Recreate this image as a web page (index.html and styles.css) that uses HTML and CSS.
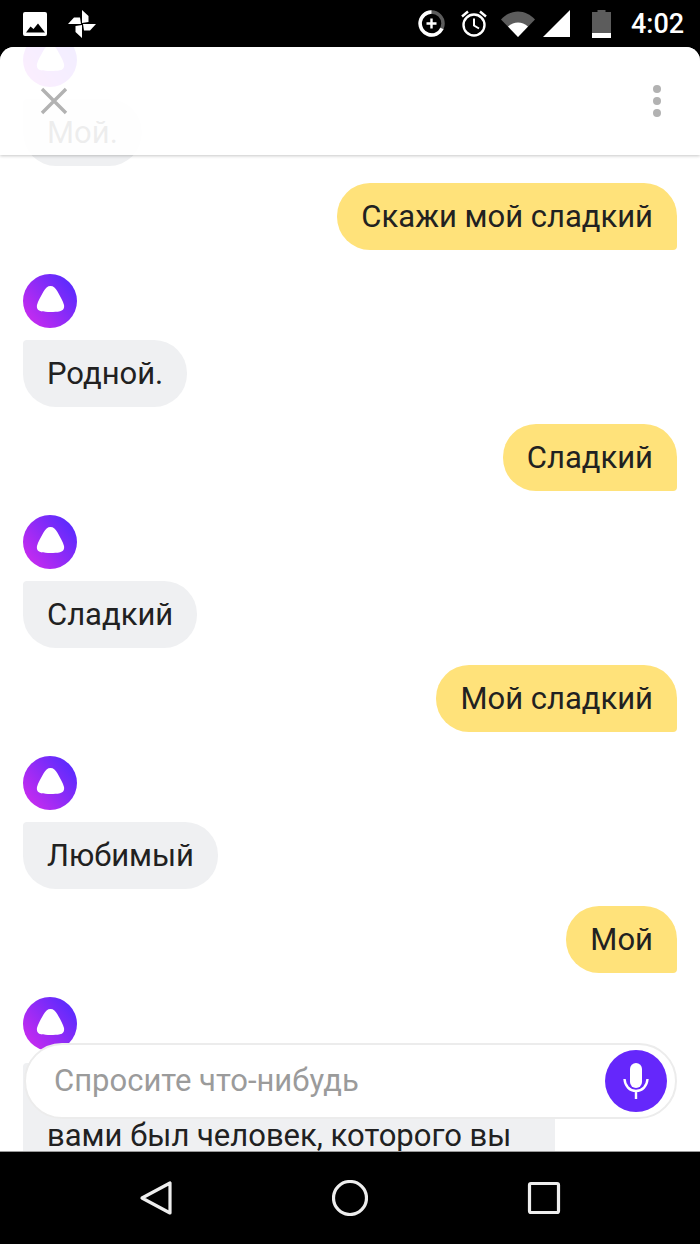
FILE: index.html
```html
<!DOCTYPE html>
<html lang="ru">
<head>
    <meta charset="UTF-8">
    <title>Алиса</title>
    <link rel="stylesheet" href="styles.css">
</head>
<body>
    <svg class="sprite" width="0" height="0">
        <defs>
            <linearGradient id="aliceGrad" x1="1" y1="0.1" x2="0" y2="0.9">
                <stop offset="0" stop-color="#4f2bff"/>
                <stop offset="1" stop-color="#d02bee"/>
            </linearGradient>
            <symbol id="alice" viewBox="0 0 54 54">
                <circle cx="27" cy="27" r="27" fill="url(#aliceGrad)"/>
                <path d="M27.500 12C24.500 12 22.500 14 20.500 17.500C18 22 15 27 14 31C13.500 34 14.500 36.500 18 37.200C21 37.800 24 38 27.500 38C31 38 34 37.800 37 37.200C40.500 36.500 41.500 34 41 31C40 27 37 22 34.500 17.500C32.500 14 30.500 12 27.500 12Z" fill="#fff"/>
            </symbol>
        </defs>
    </svg>

    <div class="phone">
        <!-- Status bar -->
        <div class="status-bar">
            <svg class="ic-image" width="24" height="24" viewBox="0 0 24 24">
                <rect width="24" height="24" rx="2" fill="#fff"/>
                <path d="M3 20.500L7.500 14.500L10.500 17L15 11.500L22 20.500Z" fill="#000"/>
            </svg>
            <svg class="ic-pinwheel" width="28" height="28" viewBox="0 0 28 28">
                <path d="M14 0L20.500 6V12L14 13ZM28 14L22 20.500H16L15 14ZM14 28L7.500 22V16L14 15ZM0 14L6 7.500H12L13 14Z" fill="#fff"/>
            </svg>
            <div class="status-space"></div>
            <svg width="27" height="27" viewBox="0 0 27 27">
                <circle cx="13.500" cy="13.500" r="11.500" fill="none" stroke="#5c5c5c" stroke-width="3.500"/>
                <path d="M13.500 2A11.500 11.500 0 1 0 24 18.500" fill="none" stroke="#fff" stroke-width="3.500"/>
                <path d="M13.500 8.500V18.500M8.500 13.500H18.500" stroke="#fff" stroke-width="2.400"/>
            </svg>
            <svg class="ic-alarm" width="28" height="27" viewBox="0 0 28 27">
                <circle cx="14" cy="15" r="10.500" fill="none" stroke="#fff" stroke-width="2.400"/>
                <path d="M14 8.500V15.500L19 18.500" fill="none" stroke="#fff" stroke-width="2"/>
                <path d="M2 6.500L8 1.500M26 6.500L20 1.500" stroke="#fff" stroke-width="2.400"/>
            </svg>
            <svg class="ic-wifi" width="34" height="26" viewBox="0 0 34 26">
                <path d="M0 8.500C4.500 3.500 10.500 0.500 17 0.500C23.500 0.500 29.500 3.500 34 8.500L17 26Z" fill="#5c5c5c"/>
                <path d="M7 15.500C10 13 13.500 11.500 17 11.500C20.500 11.500 24 13 27 15.500L17 26Z" fill="#fff"/>
            </svg>
            <svg class="ic-signal" width="27" height="27" viewBox="0 0 27 27">
                <path d="M27 0V27H0Z" fill="#fff"/>
            </svg>
            <svg class="ic-battery" width="19" height="28" viewBox="0 0 19 28">
                <path d="M5.500 0H13.500V2H19V28H0V2H5.500Z" fill="#5c5c5c"/>
                <rect y="23" width="19" height="5" fill="#fff"/>
            </svg>
            <span class="clock">4:02</span>
        </div>

        <!-- Chat sheet -->
        <div class="sheet">
            <div class="chat">
                <svg class="avatar"><use href="#alice"/></svg>
                <div class="bubble bot">Мой.</div>
                <div class="bubble user">Скажи мой сладкий</div>
                <svg class="avatar"><use href="#alice"/></svg>
                <div class="bubble bot">Родной.</div>
                <div class="bubble user">Сладкий</div>
                <svg class="avatar"><use href="#alice"/></svg>
                <div class="bubble bot">Сладкий</div>
                <div class="bubble user">Мой сладкий</div>
                <svg class="avatar"><use href="#alice"/></svg>
                <div class="bubble bot">Любимый</div>
                <div class="bubble user">Мой</div>
                <svg class="avatar"><use href="#alice"/></svg>
                <div class="bubble bot long">вами был человек, которого вы</div>
            </div>

            <div class="sheet-header">
                <svg width="28" height="28" viewBox="0 0 28 28">
                    <path d="M2 2L26 26M26 2L2 26" stroke="#b2b2b2" stroke-width="3.400"/>
                </svg>
                <div class="dots"><i></i><i></i><i></i></div>
            </div>

            <div class="composer">
                <span class="placeholder">Спросите что-нибудь</span>
                <div class="mic">
                    <svg width="26" height="37" viewBox="0 0 26 37">
                        <rect x="7" y="0" width="12" height="25" rx="6" fill="#fff"/>
                        <path d="M1.500 16C2 23 6.500 28 13 28C19.500 28 24 23 24.500 16M13 28V36" fill="none" stroke="#fff" stroke-width="2.400"/>
                    </svg>
                </div>
            </div>
        </div>

        <!-- Nav bar -->
        <div class="nav-bar">
            <svg width="36" height="36" viewBox="0 0 36 36">
                <path d="M32 3V33L4 18Z" fill="none" stroke="#eee" stroke-width="3.200" stroke-linejoin="round"/>
            </svg>
            <svg width="36" height="36" viewBox="0 0 36 36">
                <circle cx="18" cy="18" r="16.500" fill="none" stroke="#eee" stroke-width="3.200"/>
            </svg>
            <svg width="36" height="36" viewBox="0 0 36 36">
                <rect x="3.500" y="3.500" width="29" height="29" rx="1.500" fill="none" stroke="#eee" stroke-width="3.200"/>
            </svg>
        </div>
    </div>
</body>
</html>
```
FILE: styles.css
```css
* {
    padding: 0px;
    margin: 0px;
    box-sizing: border-box;
}
body {
    background-color: #000;
    font-family: Roboto, "Noto Sans", sans-serif;
    overflow: hidden;
}
.sprite {
    position: absolute;
}
.phone {
    width: 700px;
    height: 1244px;
    display: flex;
    flex-direction: column;
}

/* STATUS BAR */
.status-bar {
    height: 47px;
    flex-shrink: 0;
    display: flex;
    align-items: center;
    padding-left: 23px;
    color: #fff;
}
.ic-pinwheel {
    margin-left: 21px;
}
.status-space {
    flex: 1;
}
.ic-alarm {
    margin-left: 15px;
}
.ic-wifi {
    margin-left: 13px;
}
.ic-signal {
    margin-left: 8px;
}
.ic-battery {
    margin-left: 22px;
}
.clock {
    margin-left: 20px;
    width: 69px;
    font-size: 27px;
    font-weight: 500;
}

/* SHEET */
.sheet {
    flex: 1;
    min-height: 0;
    position: relative;
    overflow: hidden;
    background-color: #fff;
    border-radius: 14px 14px 0 0;
}
.chat {
    margin-top: -14px;
    padding: 0 23px;
    display: flex;
    flex-direction: column;
    align-items: flex-start;
}
.avatar {
    width: 54px;
    height: 54px;
    margin-top: 24px;
    flex-shrink: 0;
}
.avatar:first-child {
    margin-top: 0;
}
.bubble {
    font-size: 31px;
    line-height: 36px;
    padding: 16px 24px 15px;
    color: #212121;
    white-space: nowrap;
}
.bubble.bot {
    margin-top: 12px;
    background-color: #eff0f2;
    border-radius: 4px 33px 33px 33px;
}
.bubble.user {
    margin-top: 17px;
    align-self: flex-end;
    background-color: #ffe27a;
    border-radius: 33px 33px 4px 33px;
}
/* first line of this one sits behind the composer, rest runs under the nav bar */
.bubble.long {
    width: 532px;
    padding-top: 55px;
    padding-bottom: 40px;
}

/* HEADER */
.sheet-header {
    position: absolute;
    top: 0;
    left: 0;
    right: 0;
    height: 108px;
    padding: 0 39px 0 40px;
    display: flex;
    justify-content: space-between;
    align-items: center;
    background-color: rgba(255, 255, 255, 0.92);
    box-shadow: 0px 1px 3px rgba(0, 0, 0, 0.22);
}
.dots {
    display: flex;
    flex-direction: column;
    gap: 4px;
}
.dots i {
    display: block;
    width: 8px;
    height: 8px;
    border-radius: 50%;
    background-color: #b2b2b2;
}

/* COMPOSER */
.composer {
    position: absolute;
    left: 24px;
    right: 23px;
    top: 996px;
    height: 76px;
    padding: 0 8px 0 28px;
    display: flex;
    justify-content: space-between;
    align-items: center;
    background-color: #fff;
    border: 2px solid #ececec;
    border-radius: 38px;
}
.placeholder {
    font-size: 31px;
    color: #9b9b9b;
    margin-top: -2px;
}
.mic {
    width: 62px;
    height: 62px;
    border-radius: 50%;
    background-color: #6527fb;
    display: flex;
    justify-content: center;
    align-items: center;
}

/* NAV BAR */
.nav-bar {
    height: 93px;
    flex-shrink: 0;
    background-color: #000;
    border-top: 1px solid #999;
    display: flex;
    justify-content: center;
    align-items: center;
    gap: 158px;
}
```
